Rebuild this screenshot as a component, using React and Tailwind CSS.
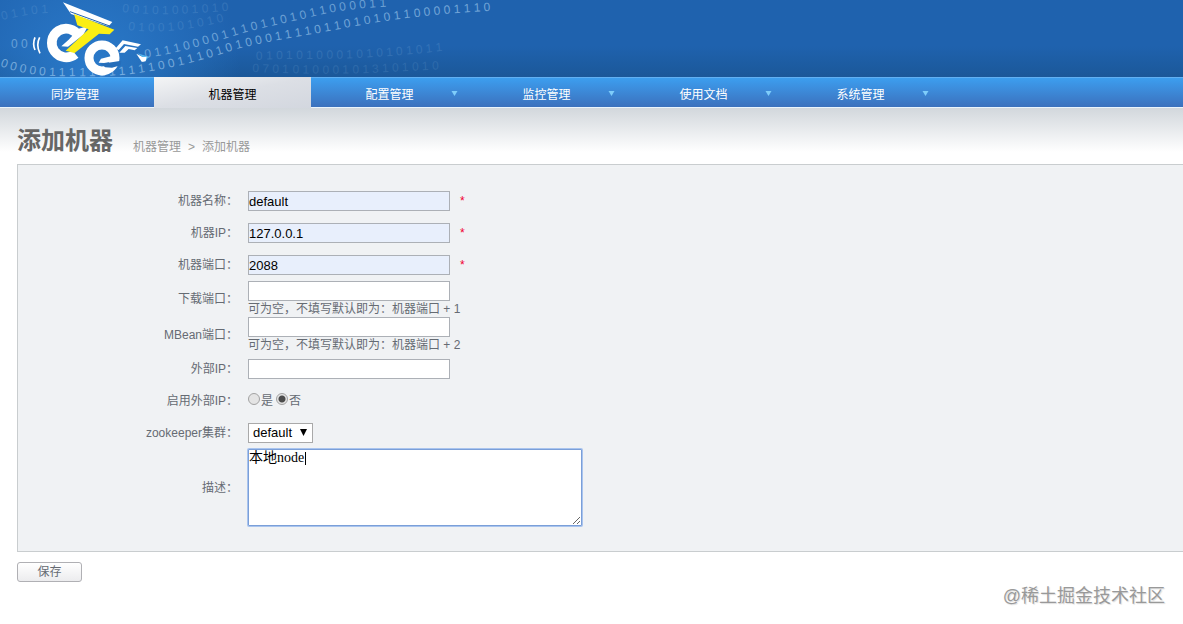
import React, { useState } from 'react';

const menus = [
  { id: 'sync', label: '同步管理', arrow: false },
  { id: 'machine', label: '机器管理', arrow: false },
  { id: 'config', label: '配置管理', arrow: true },
  { id: 'monitor', label: '监控管理', arrow: true },
  { id: 'docs', label: '使用文档', arrow: true },
  { id: 'system', label: '系统管理', arrow: true },
];

const spaced = (bits) => bits.split('').join(' ');

function Banner() {
  return (
    <header className="h-[77px] overflow-hidden bg-linear-to-b from-[#1f62ae] from-60% to-[#1b5899]">
      <svg width="520" height="77" viewBox="0 0 520 77" aria-hidden="true">
        <defs>
          <radialGradient id="glow" cx="90" cy="70" r="150" gradientUnits="userSpaceOnUse">
            <stop offset="0" stopColor="#2b7bcb" />
            <stop offset="1" stopColor="#2b7bcb" stopOpacity="0" />
          </radialGradient>
          <path id="bits-a" d="M145 58 C175 54 200 46 233 36 C255 29 280 24 307 18 C330 12 350 8 400 6" />
          <path id="bits-b" d="M0 66 C20 74 45 77 73 76 C100 77 125 76 157 70 C180 66 207 59 237 49 C265 42 290 38 313 34 C340 29 375 22 407 18 C440 14 465 12 510 10" />
          <path id="bits-c" d="M2 20 C20 16 40 12 58 13" />
          <path id="bits-d" d="M256 60 C300 58 340 60 373 57 C410 55 430 52 470 48" />
          <path id="bits-e" d="M252 72 C300 74 340 74 373 73 C400 71 430 70 470 68" />
          <path id="bits-f" d="M128 30 C160 34 190 30 230 20" />
          <path id="bits-g" d="M122 12 C160 16 190 14 236 10" />
        </defs>
        <rect width="520" height="77" fill="url(#glow)" />

        {/* binary streams */}
        <g className="font-['Liberation_Sans',sans-serif] text-[12px]" fill="#a9d2f2">
          <text x="11" y="48" opacity="0.5">0 0</text>
          <text opacity="0.55"><textPath href="#bits-a">{spaced('0111000011101101011000011')}</textPath></text>
          <text opacity="0.6"><textPath href="#bits-b">{spaced('00000111111111110011101010001111011010101100001110')}</textPath></text>
          <text opacity="0.14"><textPath href="#bits-c">{spaced('01101')}</textPath></text>
          <text opacity="0.14"><textPath href="#bits-d">{spaced('0101010001010101011')}</textPath></text>
          <text opacity="0.12"><textPath href="#bits-e">{spaced('0701010001013101010')}</textPath></text>
          <text opacity="0.14"><textPath href="#bits-f">{spaced('0100101010')}</textPath></text>
          <text opacity="0.14"><textPath href="#bits-g">{spaced('00101001010')}</textPath></text>
        </g>

        {/* bike logo, drawn on a grid three times its size */}
        <g transform="scale(0.3333)">
          <path d="M105 112 Q97 132 105 150 M119 112 Q107 135 120 160" fill="none" stroke="#fff" strokeWidth="5" />
          <path d="M236 108 A43 43 0 1 0 226 162" fill="none" stroke="#fff" strokeWidth="29" />
          <path d="M184 139 L206 119 L236 86 L264 78 L250 104 L204 140 Z" fill="#fff" />
          <circle cx="306" cy="174" r="39" fill="none" stroke="#fff" strokeWidth="27" />
          <path d="M296 188 L303 176 L350 164 L354 182 L312 189 Z" fill="#fff" />
          <path d="M301 192 L364 182 L362 196 L336 203 L316 202 Z" fill="#266eba" />
          <path d="M189 7 L337 66 L326 79 L213 42 Z" fill="#fff" />
          <path d="M210 35 L332 79" stroke="#1f62ae" strokeWidth="3" />
          <path d="M222 42 L343 89 L329 103 L297 101 L224 159 L197 152 L266 88 L232 76 Z" fill="#fbee13" />
          <path d="M346 146 L368 121 L423 133 L414 140 L372 132 L356 150 Z" fill="#fff" />
          <path d="M358 158 L376 138 L412 144 L404 151 L386 147 L374 158 Z" fill="#fff" />
          <path d="M409 161 L425 185 L435 183 L430 172 Z" fill="#fff" />
          <path d="M412 160 L446 170 L437 183 L428 171 Z" fill="#55b8ef" />
          <path d="M424 172 L440 170 L437 184 L427 185 Z" fill="#fff" />
        </g>
      </svg>
    </header>
  );
}

function MenuBar() {
  const [active, setActive] = useState('machine');

  return (
    <nav className="flex h-[31px] border-t border-b border-t-[#62b0f2] border-b-[#eaf4fc] bg-linear-to-b from-[#3c9eef] to-[#3b71bd]">
      {menus.map((menu, i) => (
        <a
          key={menu.id}
          href={`#${menu.id}`}
          onClick={() => setActive(menu.id)}
          className={`relative -my-px flex shrink-0 items-center justify-center pt-1 ${
            i === 0 ? 'w-[154px] pr-1' : 'w-[157px]'
          } ${
            active === menu.id
              ? 'bg-linear-to-br from-[#f4f5f6] via-[#dcdfe5] to-[#d3d7df] text-black'
              : 'text-white'
          }`}
        >
          {menu.label}
          {menu.arrow && (
            <svg className="absolute top-[14px] right-[10px]" width="7" height="5" viewBox="0 0 7 5" aria-hidden="true">
              <path d="M0.5 0 H6.5 L3.5 5 Z" fill="#7fcdfa" />
            </svg>
          )}
        </a>
      ))}
    </nav>
  );
}

function Row({ label, htmlFor, tall, children }) {
  return (
    <div className={`flex items-center gap-[10px] ${tall ? 'min-h-9' : 'min-h-8'}`}>
      <label htmlFor={htmlFor} className="w-[220px] shrink-0 text-right">
        {label}：
      </label>
      {children}
    </div>
  );
}

function TextField({ id, value, filled }) {
  return (
    <input
      id={id}
      type="text"
      defaultValue={value}
      className={`block h-5 w-[202px] border border-[#acb0b6] text-[13px] text-black outline-none ${
        filled ? 'bg-[#e8effc]' : 'bg-white'
      }`}
    />
  );
}

function Required() {
  return <span className="text-[#f00030]">*</span>;
}

function Radio({ label, ...props }) {
  return (
    <label className="flex items-center">
      <input
        type="radio"
        name="useExternalIp"
        className="mr-px mb-1 size-3 appearance-none rounded-full border border-[#a2a2a2] bg-[#e4e4e4] checked:bg-[radial-gradient(circle,#4c4c4c_3px,#e4e4e4_4px)]"
        {...props}
      />
      <span>{label}</span>
    </label>
  );
}

function App() {
  return (
    <div className="relative min-h-screen bg-white font-['Liberation_Sans','Noto_Sans_CJK_SC',sans-serif] text-[12px] leading-4 text-[#666b73]">
      <Banner />
      <MenuBar />

      <main className="bg-linear-to-b from-[#d2d7dc] to-white to-[44px] pl-[17px]">
        {/* Page title */}
        <div className="flex h-14 items-end gap-5 pb-[9px] text-[#999]">
          <h1 className="text-[24px] leading-7 font-bold text-[#666]">添加机器</h1>
          <div className="flex gap-[7px]">
            <a href="#machine">机器管理</a>
            <span>&gt;</span>
            <span>添加机器</span>
          </div>
        </div>

        <form onSubmit={(e) => e.preventDefault()}>
          <div className="border border-r-0 border-[#c9cdcf] bg-[#f0f2f4] pt-5 pb-[25px]">
            <Row label="机器名称" htmlFor="name">
              <TextField id="name" value="default" filled />
              <Required />
            </Row>
            <Row label="机器IP" htmlFor="ip">
              <TextField id="ip" value="127.0.0.1" filled />
              <Required />
            </Row>
            <Row label="机器端口" htmlFor="port">
              <TextField id="port" value="2088" filled />
              <Required />
            </Row>
            <Row label="下载端口" htmlFor="downloadPort" tall>
              <div>
                <TextField id="downloadPort" />
                <p>可为空，不填写默认即为：机器端口 + 1</p>
              </div>
            </Row>
            <Row label="MBean端口" htmlFor="mbeanPort" tall>
              <div>
                <TextField id="mbeanPort" />
                <p>可为空，不填写默认即为：机器端口 + 2</p>
              </div>
            </Row>
            <Row label="外部IP" htmlFor="externalIp">
              <TextField id="externalIp" />
            </Row>
            <Row label="启用外部IP" htmlFor="useYes">
              <div className="flex gap-[3px]">
                <Radio id="useYes" label="是" value="true" />
                <Radio id="useNo" label="否" value="false" defaultChecked />
              </div>
            </Row>
            <Row label="zookeeper集群" htmlFor="cluster">
              <div className="relative">
                <select
                  id="cluster"
                  className="block h-5 w-[65px] appearance-none border border-[#a9a9a9] bg-white pl-1 text-[13px] text-black"
                >
                  <option>default</option>
                </select>
                <svg className="pointer-events-none absolute top-[6px] right-[6px]" width="7" height="7" viewBox="0 0 7 7" aria-hidden="true">
                  <path d="M0 0 H7 L3.5 7 Z" fill="#000" />
                </svg>
              </div>
            </Row>
            <Row label="描述" htmlFor="description">
              <div className="relative">
                <textarea
                  id="description"
                  defaultValue="本地node"
                  className="block h-[77px] w-[334px] rounded-[1px] border border-[#7b9fd8] bg-white font-['Liberation_Serif','Noto_Sans_CJK_SC',serif] text-[14px] leading-4 text-black ring-1 ring-[#a9c4ee] outline-none"
                />
                <span className="pointer-events-none absolute top-[3px] left-[57px] h-[13px] w-px bg-black" />
              </div>
            </Row>
          </div>

          <button
            type="submit"
            className="mt-[10px] block h-5 w-[65px] rounded-[3px] border border-[#b0b0b4] bg-linear-to-b from-white to-[#ececee]"
          >
            保存
          </button>
        </form>
      </main>

      {/* Watermark */}
      <div className="absolute right-[18px] bottom-4 text-[18px] leading-6 text-[#999] [text-shadow:1px_1px_1px_#ddd]">
        @稀土掘金技术社区
      </div>
    </div>
  );
}

export default App;
